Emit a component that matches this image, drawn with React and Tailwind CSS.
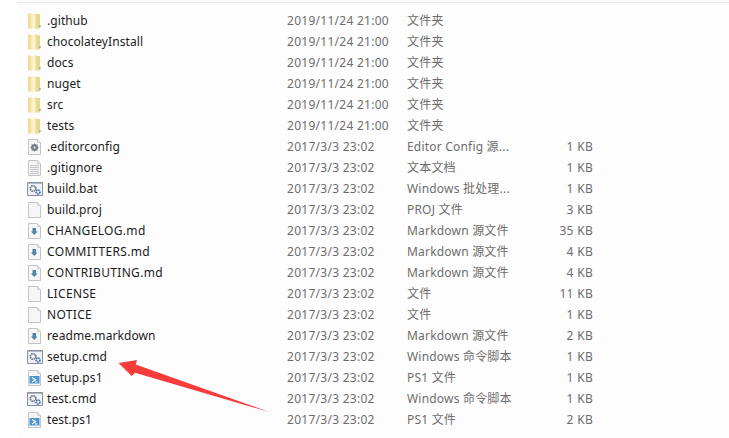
import React from "react";

const NEW = "2019/11/24 21:00";
const OLD = "2017/3/3 23:02";

const files = [
  { name: ".github", date: NEW, type: "文件夹", size: "", icon: "folder" },
  { name: "chocolateyInstall", date: NEW, type: "文件夹", size: "", icon: "folder" },
  { name: "docs", date: NEW, type: "文件夹", size: "", icon: "folder" },
  { name: "nuget", date: NEW, type: "文件夹", size: "", icon: "folder" },
  { name: "src", date: NEW, type: "文件夹", size: "", icon: "folder" },
  { name: "tests", date: NEW, type: "文件夹", size: "", icon: "folder" },
  { name: ".editorconfig", date: OLD, type: "Editor Config 源...", size: "1 KB", icon: "config" },
  { name: ".gitignore", date: OLD, type: "文本文档", size: "1 KB", icon: "text" },
  { name: "build.bat", date: OLD, type: "Windows 批处理...", size: "1 KB", icon: "cmd" },
  { name: "build.proj", date: OLD, type: "PROJ 文件", size: "3 KB", icon: "blank" },
  { name: "CHANGELOG.md", date: OLD, type: "Markdown 源文件", size: "35 KB", icon: "md" },
  { name: "COMMITTERS.md", date: OLD, type: "Markdown 源文件", size: "4 KB", icon: "md" },
  { name: "CONTRIBUTING.md", date: OLD, type: "Markdown 源文件", size: "4 KB", icon: "md" },
  { name: "LICENSE", date: OLD, type: "文件", size: "11 KB", icon: "blank" },
  { name: "NOTICE", date: OLD, type: "文件", size: "1 KB", icon: "blank" },
  { name: "readme.markdown", date: OLD, type: "Markdown 源文件", size: "2 KB", icon: "md" },
  { name: "setup.cmd", date: OLD, type: "Windows 命令脚本", size: "1 KB", icon: "cmd" },
  { name: "setup.ps1", date: OLD, type: "PS1 文件", size: "1 KB", icon: "ps" },
  { name: "test.cmd", date: OLD, type: "Windows 命令脚本", size: "1 KB", icon: "cmd" },
  { name: "test.ps1", date: OLD, type: "PS1 文件", size: "2 KB", icon: "ps" },
];

function Page({ children }) {
  return (
    <svg width="16" height="16" viewBox="0 0 16 16" className="shrink-0">
      <path d="M1.500.5h9l3 3v12h-12z" fill="#f6f6f6" stroke="#c4c4c4" />
      <path d="M10.500.5v3h3" fill="#e8e8e8" stroke="#cfcfcf" />
      {children}
    </svg>
  );
}

function Gear({ cx, cy, r, color, fill }) {
  return (
    <g>
      <circle cx={cx} cy={cy} r={r} fill={fill} stroke={color} strokeWidth="1.600" strokeDasharray="1.500 .7" />
      <circle cx={cx} cy={cy} r={r * 0.35} fill="#ffffff" />
    </g>
  );
}

function FileIcon({ kind }) {
  if (kind === "folder") {
    return (
      <svg width="16" height="16" viewBox="0 0 16 16" className="shrink-0">
        <defs>
          <linearGradient id="leaf" x1="0" y1="0" x2="1" y2="0">
            <stop offset="0" stopColor="#f4e6ae" />
            <stop offset="0.5" stopColor="#fcf6d6" />
            <stop offset="1" stopColor="#efe0a0" />
          </linearGradient>
        </defs>
        <path d="M1 0.500h3.500v15H1z" fill="#eedc98" />
        <path d="M8.500 1h4.500v14.500H8.500z" fill="#e9d78c" />
        <path d="M3.500 1.500L9.500 0v15.500h-6z" fill="url(#leaf)" />
        <path d="M12.500 12h1v2h-1z" fill="#4a93c8" />
      </svg>
    );
  }
  if (kind === "config") {
    return (
      <Page>
        <circle cx="7.500" cy="8.500" r="2.500" fill="none" stroke="#77808a" strokeWidth="2" />
        <path d="M7.500 4.500v8M3.500 8.500h8M4.700 5.700l5.600 5.600M10.300 5.700l-5.600 5.600" stroke="#77808a" strokeWidth="1" />
        <circle cx="7.500" cy="8.500" r="1" fill="#f6f6f6" />
      </Page>
    );
  }
  if (kind === "text") {
    return (
      <Page>
        <path d="M3 5.500h9M3 7.500h9M3 9.500h9M3 11.500h9M3 13.500h9" stroke="#c0c5cb" />
      </Page>
    );
  }
  if (kind === "md") {
    return (
      <Page>
        <path d="M5.500 5h3.500v3.500h1.500L7.250 12 4 8.500h1.500z" fill="#4c87aa" />
      </Page>
    );
  }
  if (kind === "ps") {
    return (
      <Page>
        <path d="M2.500 6h10v7.500h-10z" fill="#4a97d0" />
        <path d="M5 7.500l3.500 2.200L5 12" fill="none" stroke="#ffffff" strokeWidth="1.300" />
        <path d="M8 12h2.500" stroke="#ffffff" />
      </Page>
    );
  }
  if (kind === "cmd") {
    return (
      <svg width="16" height="16" viewBox="0 0 16 16" className="shrink-0">
        <path d="M.5 1.500h15v13H.5z" fill="#eef2f6" stroke="#868f9a" />
        <path d="M1 2h14v1H1z" fill="#b4bcc5" />
        <Gear cx={6} cy={7.500} r={2.800} color="#66737f" fill="#dfe5ea" />
        <Gear cx={11} cy={11} r={2} color="#3a6fa3" fill="#d5e5f3" />
      </svg>
    );
  }
  return <Page />;
}

function Arrow() {
  return (
    <svg width="729" height="438" viewBox="0 0 729 438" className="absolute left-0 top-0 pointer-events-none">
      <path d="M118.500 363L137 360 135.700 364.500 270 412.300 135 372.700 131.700 376z" fill="#f83b3b" />
    </svg>
  );
}

export default function App() {
  return (
    <div className="relative w-[729px] h-[438px] overflow-hidden bg-white pl-[18px] font-['Noto_Sans','Noto_Sans_CJK_SC',sans-serif] text-[12px]">
      <div className="h-full mt-[2px] border-t border-[#e3e9f2] bg-[#fdfdfd] pt-[7px]">
        {files.map((f) => (
          <div key={f.name} className="h-[21px] flex items-center">
            <div className="w-[29px] pl-[9px] shrink-0">
              <FileIcon kind={f.icon} />
            </div>
            {/* capitals run wider in the reference font than in Noto Sans */}
            <div className={`w-[240px] shrink-0 text-[#1c1c1c] ${/^[A-Z]/.test(f.name) ? "tracking-[0.33px]" : "tracking-[0.08px]"}`}>
              {f.name}
            </div>
            <div className="w-[120px] shrink-0 text-[#6d6d6d] tracking-[0.27px]">{f.date}</div>
            <div className="w-[110px] shrink-0 text-[#6d6d6d] tracking-[0.2px] whitespace-nowrap">{f.type}</div>
            <div className="w-[76px] shrink-0 text-right text-[#6d6d6d] tracking-[0.3px]">{f.size}</div>
          </div>
        ))}
      </div>
      <Arrow />
    </div>
  );
}
